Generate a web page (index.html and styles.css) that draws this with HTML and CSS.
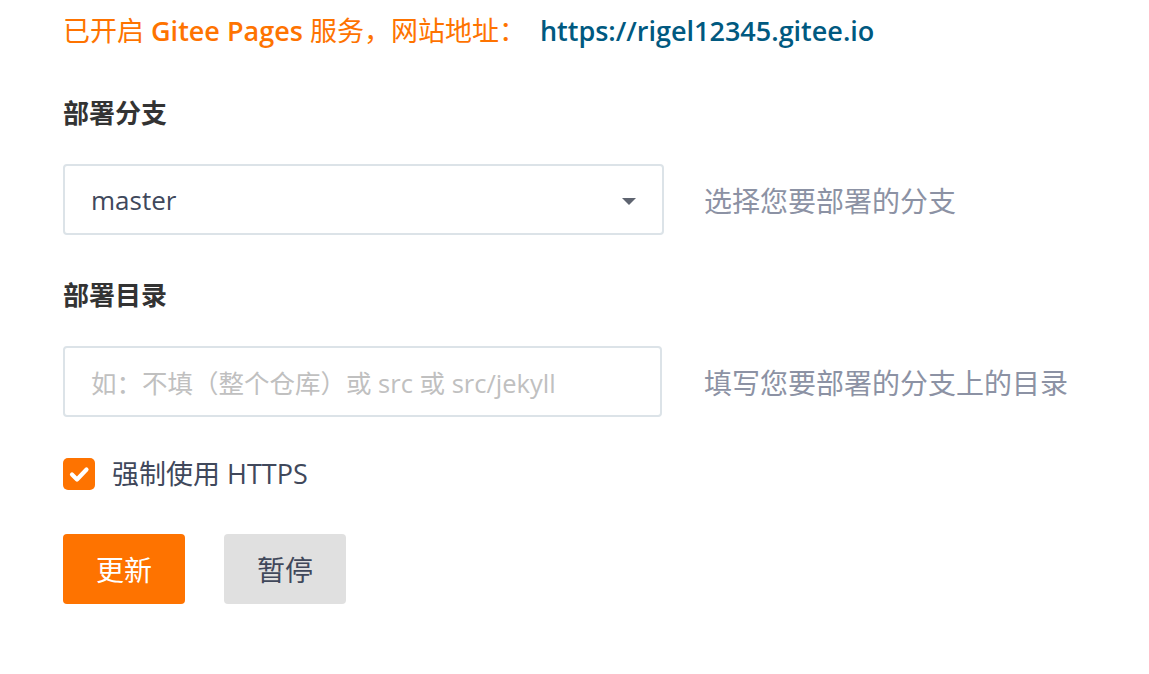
FILE: index.html
```html
<!DOCTYPE html>
<html lang="zh-CN">
<head>
<meta charset="utf-8">
<title>Gitee Pages</title>
<link rel="stylesheet" href="styles.css">
</head>
<body>
<div class="page">
  <p class="status"><span class="status-text">已开启 <b class="brand">Gitee Pages</b> 服务，网站地址：</span><a class="status-link" href="#">https://rigel12345.gitee.io</a></p>

  <div class="field">
    <div class="label">部署分支</div>
    <div class="row">
      <div class="control select">
        <span class="value">master</span>
        <span class="caret"></span>
      </div>
      <div class="hint">选择您要部署的分支</div>
    </div>
  </div>

  <div class="field">
    <div class="label">部署目录</div>
    <div class="row">
      <div class="control input">
        <span class="placeholder">如：不填（整个仓库）或 src 或 src/jekyll</span>
      </div>
      <div class="hint">填写您要部署的分支上的目录</div>
    </div>
  </div>

  <label class="check">
    <span class="box"><svg viewBox="0 0 32 32" width="32" height="32"><path d="M9 16.5 L14 21.5 L23.5 11.5" fill="none" stroke="#fff" stroke-width="4.2" stroke-linecap="round" stroke-linejoin="round"/></svg></span>
    <span class="check-text">强制使用 HTTPS</span>
  </label>

  <div class="actions">
    <button class="btn primary">更新</button>
    <button class="btn secondary">暂停</button>
  </div>
</div>
</body>
</html>
```

FILE: styles.css
```css
html, body {
  margin: 0;
  padding: 0;
  background: #fff;
}
body {
  font-family: "Open Sans", "Noto Sans CJK SC", sans-serif;
  color: #40485b;
}
.page {
  padding: 11px 0 0 63px;
}
.status {
  margin: 0;
  font-size: 27px;
  line-height: 40px;
  white-space: nowrap;
}
.status-text {
  color: #fe7300;
  font-weight: 400;
}
.brand {
  font-weight: 600;
}
.status-link {
  color: #005980;
  font-weight: 600;
  text-decoration: none;
  margin-left: 14px;
}
.field {
  margin-top: 42px;
}
.field + .field {
  margin-top: 40px;
}
.label {
  font-size: 26px;
  font-weight: 700;
  color: #333;
  line-height: 40px;
}
.row {
  display: flex;
  align-items: center;
  margin-top: 31px;
}
.control {
  box-sizing: border-box;
  width: 601px;
  height: 71px;
  border: 2px solid #dce3e8;
  border-radius: 4px;
  display: flex;
  align-items: center;
  padding: 0 26px 0 26px;
  font-size: 26px;
}
.input {
  width: 599px;
  height: 71px;
}
.value {
  flex: 1;
  color: #40485b;
}
.caret {
  width: 0;
  height: 0;
  border-left: 7px solid transparent;
  border-right: 7px solid transparent;
  border-top: 7px solid #5e6470;
  margin-top: 4px;
}
.placeholder {
  color: #c0c0c0;
  white-space: nowrap;
  font-size: 25.5px;
}
.hint {
  margin-left: 40px;
  font-size: 28px;
  color: #8c92a4;
  white-space: nowrap;
}
.input + .hint {
  margin-left: 42px;
}
.check {
  display: flex;
  align-items: center;
  margin-top: 41px;
  gap: 17px;
  font-size: 27px;
  line-height: 32px;
  color: #40485b;
}
.box {
  width: 32px;
  height: 32px;
  border-radius: 5px;
  background: #fe7300;
  display: block;
}
.box svg {
  display: block;
}
.actions {
  display: flex;
  gap: 39px;
  margin-top: 44px;
}
.btn {
  width: 122px;
  height: 70px;
  border: none;
  border-radius: 4px;
  font-family: "Open Sans", "Noto Sans CJK SC", sans-serif;
  font-size: 28px;
  padding: 0;
  cursor: pointer;
}
.primary {
  background: #fe7300;
  color: #fff;
}
.secondary {
  background: #e0e0e0;
  color: #40485b;
}
```
